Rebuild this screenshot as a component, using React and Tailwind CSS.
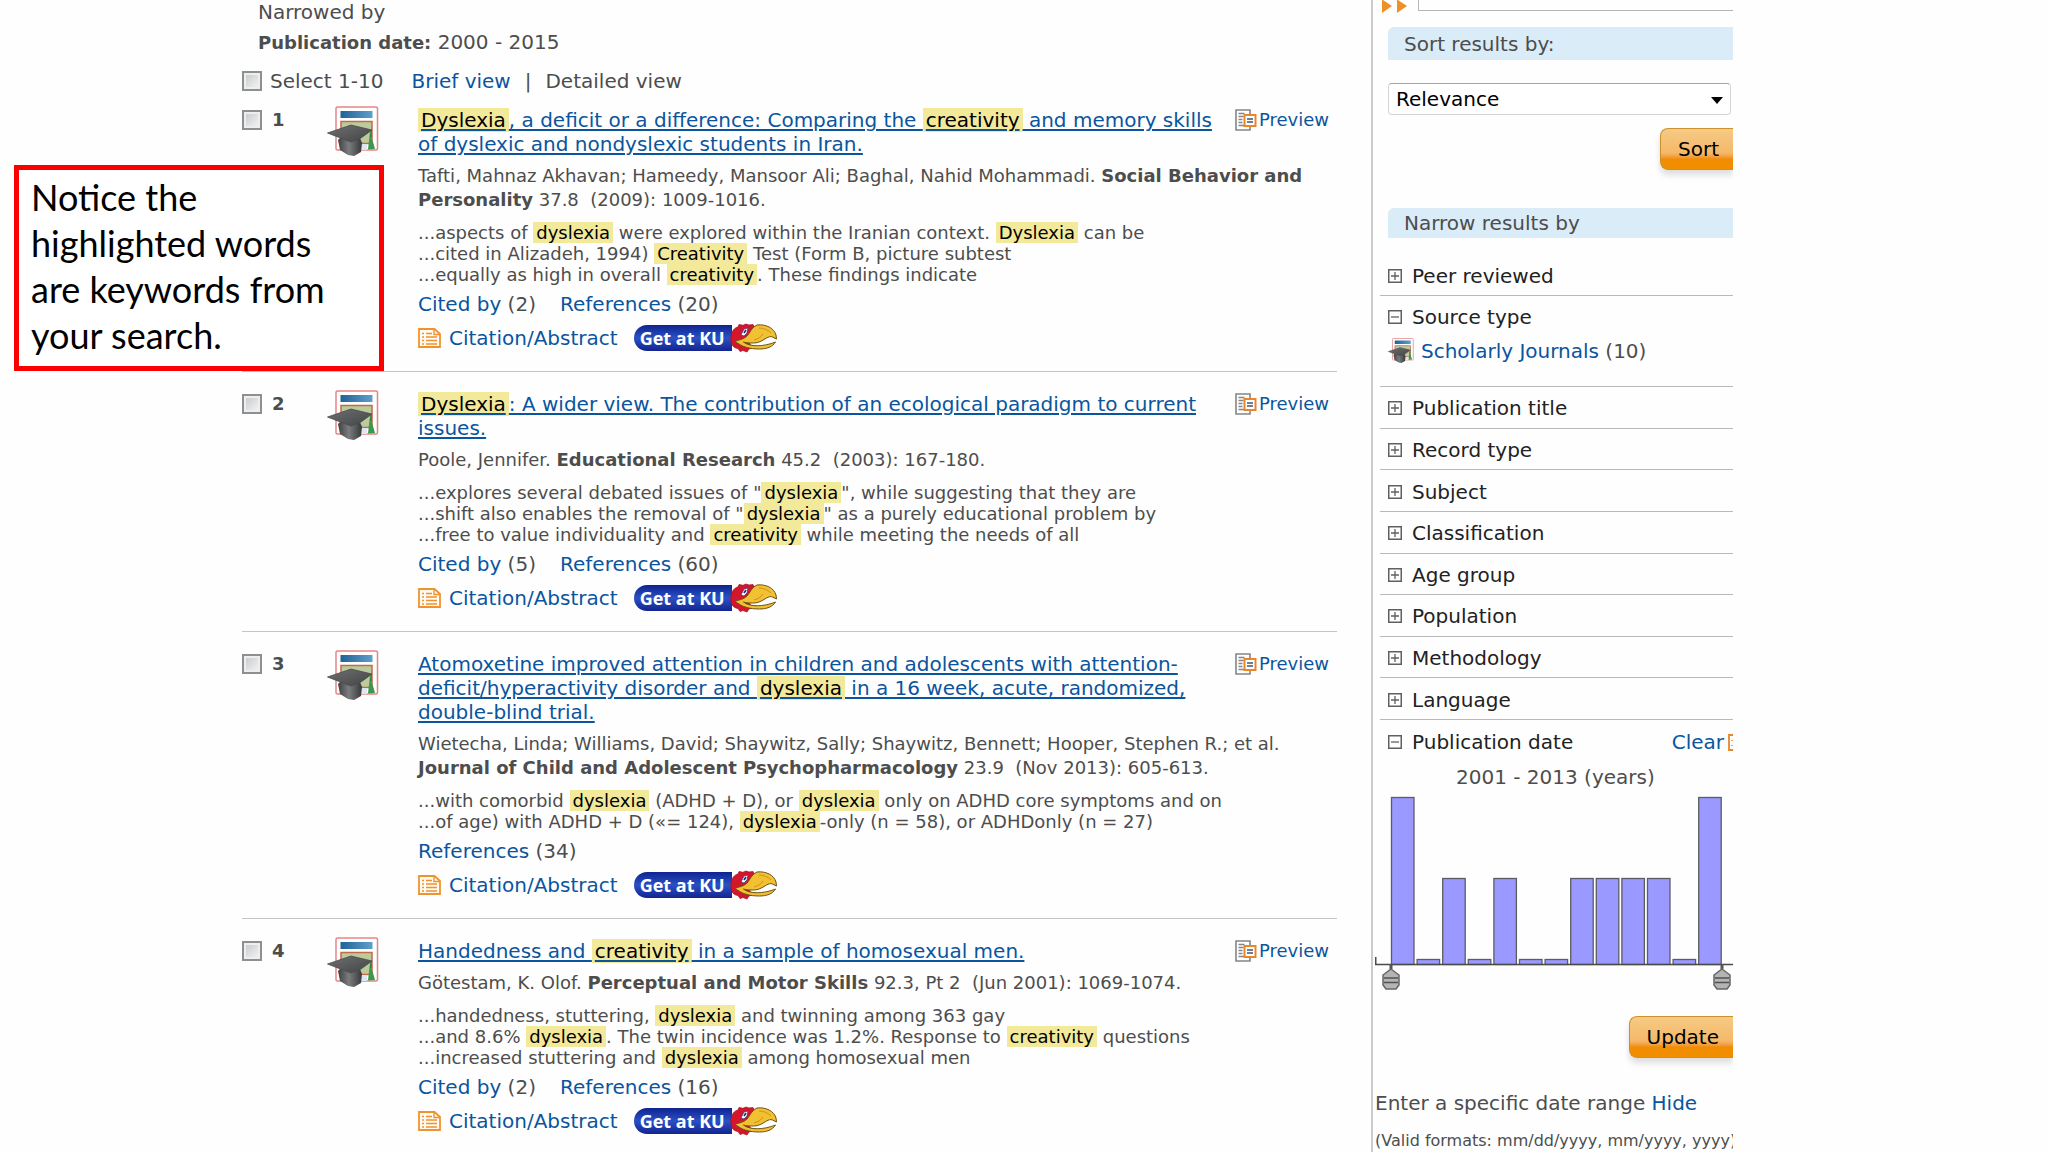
import React from "react";

function Mark({ children }) {
  return <mark className="bg-[#f3e99b] px-[3px] text-black">{children}</mark>;
}

/* Splits a string on *stars* and highlights the starred keywords. */
function Rich({ text }) {
  return text
    .split("*")
    .map((part, i) => (i % 2 ? <Mark key={i}>{part}</Mark> : <React.Fragment key={i}>{part}</React.Fragment>));
}

function Lines({ lines }) {
  return lines.map((line, i) => (
    <span key={i} className="block whitespace-pre">
      <Rich text={line} />
    </span>
  ));
}

function Check({ id, label }) {
  return (
    <input
      id={id}
      type="checkbox"
      aria-label={label}
      className="size-5 shrink-0 appearance-none border-2 border-[#8e8f8f] bg-linear-to-br from-[#c4c8cc] to-[#f6f6f6] outline-2 -outline-offset-4 outline-[#eeeeee]"
    />
  );
}

function JournalIcon({ className }) {
  return (
    <svg viewBox="0 0 52 52" className={className} aria-hidden="true">
      <defs>
        <linearGradient id="bar" x1="0" x2="1">
          <stop offset="0" stopColor="#1f6297" />
          <stop offset="1" stopColor="#5f9fcb" />
        </linearGradient>
        <linearGradient id="cap" x1="0" x2="1" y2="1">
          <stop offset="0" stopColor="#6f7072" />
          <stop offset="1" stopColor="#434446" />
        </linearGradient>
        <linearGradient id="base" x1="0" x2="1">
          <stop offset="0" stopColor="#3f4042" />
          <stop offset="0.45" stopColor="#7b7c7e" />
          <stop offset="1" stopColor="#37383a" />
        </linearGradient>
      </defs>
      <rect x="9" y="1" width="41.500" height="43" rx="1.500" fill="#fff" stroke="#e58585" strokeWidth="1.500" />
      <rect x="13.500" y="5" width="32" height="7" fill="url(#bar)" />
      <rect x="14" y="15.500" width="31" height="22" fill="#bccb9c" stroke="#c4694a" strokeWidth="1.500" />
      <path d="M34 44h6v-6h-6z" fill="#dfe6f3" />
      <path d="M43 26c2 3 1 7 3 10l2 7-7 .5 1-9z" fill="#38994f" />
      <path d="M11 34l3-3 19 1 2 5-1 9-7 4-6-1-8-5z" fill="url(#base)" />
      <path d="M.5 27L24 19l21 5-11 8-10 4-8-3z" fill="url(#cap)" stroke="#4a4b4d" strokeWidth=".8" />
      <path d="M44 25v6" stroke="#2f7f45" strokeWidth="1.500" />
    </svg>
  );
}

function PreviewIcon() {
  return (
    <svg viewBox="0 0 22 23" className="h-[23px] w-[22px] shrink-0" fill="none" aria-hidden="true">
      <path d="M1 1h14v20H1z" fill="#fff" stroke="#858585" strokeWidth="1.600" />
      <path d="M3.500 4.500h6M3.500 7.500h5M3.500 10.500h4M3.500 13.500h4M3.500 16.500h7" stroke="#858585" strokeWidth="1.300" />
      <path d="M9.500 6h11v11h-11z" fill="#fff" stroke="#e8862c" strokeWidth="2" />
      <path d="M12 10h6M12 13h6" stroke="#6f7f92" strokeWidth="1.800" />
    </svg>
  );
}

function CitationIcon() {
  return (
    <svg viewBox="0 0 23 20" className="h-5 w-[23px] shrink-0" fill="none" stroke="#f0932f" aria-hidden="true">
      <path d="M1 1h15.500L22 6v13H1z" fill="#fffaf2" strokeWidth="1.800" />
      <path d="M16 1v5.500h6" strokeWidth="1.400" />
      <path d="M4 5.500h2M8 5.500h6M4 9h2M8 9h11M4 12.500h2M8 12.500h11M4 16h2M8 16h11" strokeWidth="1.600" />
    </svg>
  );
}

function JayhawkIcon() {
  return (
    <svg viewBox="0 0 50 30" className="-ml-1 h-[30px] w-[50px] shrink-0" aria-hidden="true">
      <path
        d="M3 18C2 11 5 5 10 4l1-2.500 4 .8L18 1l3 1 4-.5L27 5l-2 5-5 7 4 8-3 1-2 3-4-1.500-3 1-2-3C6 25 3 22 3 18z"
        fill="#d3162b"
        stroke="#a30e20"
        strokeWidth=".7"
      />
      <path
        d="M7 18c5-1 9-2 12-5 3-3 4-8 10-11 9-1 17 3 19 10l.5 4-4-2c-2-1-4 0-6 1-5 3-8 5-13 5-3 0-8 0-10-1 6 5 20 5 32 0-3 5-9 7-16 7-10 0-18-2-24.500-8z"
        fill="#f2c132"
        stroke="#6e5116"
        strokeWidth="1"
        strokeLinejoin="round"
      />
      <path d="M26 17c4-1 7-3 9-6M31 5c5 0 9 2 12 5" fill="none" stroke="#c8921f" strokeWidth="1" />
      <path d="M13 12l3-6 4-1-1 5-3 3z" fill="#fff" stroke="#38306a" strokeWidth=".7" />
      <path d="M16 10l2-3" stroke="#1a2a86" strokeWidth="1.600" />
    </svg>
  );
}

function ToggleIcon({ open }) {
  return (
    <svg viewBox="0 0 14 14" className="size-3.5 shrink-0" fill="none" stroke="#606060" aria-hidden="true">
      <path d="M.75.75h12.500v12.500H.75z" strokeWidth="1.500" />
      <path d={open ? "M3 7h8" : "M3 7h8M7 3v8"} strokeWidth="1.300" />
    </svg>
  );
}

const RESULTS = [
  {
    title: [
      "*Dyslexia*, a deficit or a difference: Comparing the *creativity* and memory skills",
      "of dyslexic and nondyslexic students in Iran.",
    ],
    source: (
      <>
        Tafti, Mahnaz Akhavan; Hameedy, Mansoor Ali; Baghal, Nahid Mohammadi. <b>Social Behavior and</b>
        <br />
        <b>Personality</b> 37.8&nbsp; (2009): 1009-1016.
      </>
    ),
    snippets: [
      "...aspects of *dyslexia* were explored within the Iranian context. *Dyslexia* can be",
      "...cited in Alizadeh, 1994) *Creativity* Test (Form B, picture subtest",
      "...equally as high in overall *creativity*. These findings indicate",
    ],
    cited: 2,
    refs: 20,
  },
  {
    title: ["*Dyslexia*: A wider view. The contribution of an ecological paradigm to current", "issues."],
    source: (
      <>
        Poole, Jennifer. <b>Educational Research</b> 45.2&nbsp; (2003): 167-180.
      </>
    ),
    snippets: [
      '...explores several debated issues of "*dyslexia*", while suggesting that they are',
      '...shift also enables the removal of "*dyslexia*" as a purely educational problem by',
      "...free to value individuality and *creativity* while meeting the needs of all",
    ],
    cited: 5,
    refs: 60,
  },
  {
    title: [
      "Atomoxetine improved attention in children and adolescents with attention-",
      "deficit/hyperactivity disorder and *dyslexia* in a 16 week, acute, randomized,",
      "double-blind trial.",
    ],
    source: (
      <>
        Wietecha, Linda; Williams, David; Shaywitz, Sally; Shaywitz, Bennett; Hooper, Stephen R.; et al.
        <br />
        <b>Journal of Child and Adolescent Psychopharmacology</b> 23.9&nbsp; (Nov 2013): 605-613.
      </>
    ),
    snippets: [
      "...with comorbid *dyslexia* (ADHD + D), or *dyslexia* only on ADHD core symptoms and on",
      "...of age) with ADHD + D («= 124), *dyslexia*-only (n = 58), or ADHDonly (n = 27)",
    ],
    refs: 34,
  },
  {
    title: ["Handedness and *creativity* in a sample of homosexual men."],
    source: (
      <>
        Götestam, K. Olof. <b>Perceptual and Motor Skills</b> 92.3, Pt 2&nbsp; (Jun 2001): 1069-1074.
      </>
    ),
    snippets: [
      "...handedness, stuttering, *dyslexia* and twinning among 363 gay",
      "...and 8.6% *dyslexia*. The twin incidence was 1.2%. Response to *creativity* questions",
      "...increased stuttering and *dyslexia* among homosexual men",
    ],
    cited: 2,
    refs: 16,
  },
];

function Result({ item, number }) {
  return (
    <li className="flex border-b border-[#c4c4c4] pt-5 pb-[21px] first:pt-0 last:border-0">
      <label className="flex h-6 w-[85px] shrink-0 items-center gap-2.5 text-lg font-bold">
        <Check label={`Select result ${number}`} />
        {number}
      </label>
      <JournalIcon className="-mt-0.5 mr-[39px] size-[52px] shrink-0" />
      <div className="min-w-0 flex-1">
        <div className="flex items-start justify-between">
          <h2 className="text-xl leading-6">
            <a href="#" className="text-[#0a559e] underline decoration-2 underline-offset-2">
              <Lines lines={item.title} />
            </a>
          </h2>
          <a href="#" className="mr-2 flex h-6 shrink-0 items-center gap-0.5 text-lg text-[#0a559e]">
            <PreviewIcon />
            Preview
          </a>
        </div>
        <p className="mt-2 text-lg leading-6 whitespace-nowrap">{item.source}</p>
        <p className="mt-2.5 text-lg leading-[21px]">
          <Lines lines={item.snippets} />
        </p>
        <p className="mt-[7px] flex gap-6 text-xl leading-6">
          {item.cited && (
            <span>
              <a href="#" className="text-[#0a559e]">Cited by</a> ({item.cited})
            </span>
          )}
          <span>
            <a href="#" className="text-[#0a559e]">References</a> ({item.refs})
          </span>
        </p>
        <div className="mt-2.5 flex h-6 items-center text-xl">
          <a href="#" className="flex items-center gap-2 text-[#0a559e]">
            <CitationIcon />
            Citation/Abstract
          </a>
          <a href="#" className="ml-4 flex h-[30px] items-center" aria-label="Get at KU">
            <span className="flex h-[26px] w-[98px] items-center rounded-l-full bg-linear-to-b from-[#0f2390] via-[#2c50c4] to-[#13248f] pl-1.5 font-['Open_Sans',sans-serif] text-lg font-bold whitespace-nowrap text-white">
              Get at KU
            </span>
            <JayhawkIcon />
          </a>
        </div>
      </div>
    </li>
  );
}

const FACETS = [
  "Publication title",
  "Record type",
  "Subject",
  "Classification",
  "Age group",
  "Population",
  "Methodology",
  "Language",
];

function Facet({ label, open }) {
  return (
    <button type="button" className="flex items-center gap-2.5 pl-2 text-left text-xl leading-6 text-[#222222]">
      <ToggleIcon open={open} />
      {label}
    </button>
  );
}

const YEARS = [167, 5, 86, 5, 86, 5, 5, 86, 86, 86, 86, 5, 167];

function Handle({ x }) {
  return (
    <g transform={`translate(${x} 170)`}>
      <path d="M0-2v5" stroke="#555" strokeWidth="3" />
      <path d="M0 3l8 6v10l-3 4H-5l-3-4V9z" fill="#b4b4b4" stroke="#666" strokeWidth="1.500" />
      <path d="M-7 12H7M-7 16.500H7" stroke="#505050" strokeWidth="1.500" />
    </g>
  );
}

function YearChart() {
  return (
    <svg viewBox="0 0 358 196" className="h-[196px] w-[358px] shrink-0" role="img" aria-label="Results per year">
      {YEARS.map((h, i) => (
        <rect
          key={i}
          x={16.5 + i * 25.6}
          y={168.5 - h}
          width="22.500"
          height={h}
          fill="#9999ff"
          stroke="#5c5c66"
          strokeWidth="1.300"
        />
      ))}
      <path d="M.75 161v7.500H358" fill="none" stroke="#4a4a4a" strokeWidth="1.500" />
      <Handle x={16} />
      <Handle x={347} />
    </svg>
  );
}

function OrangeButton({ children }) {
  return (
    <button
      type="button"
      className="h-[42px] rounded-l-lg border border-r-0 border-[#c9922f] bg-linear-to-b from-[#f6ca85] from-0% via-[#f5b868] via-60% to-[#f18e00] to-75% pr-3.5 pl-[17px] text-xl text-black shadow-[0_5px_6px_#dddddd]"
    >
      {children}
    </button>
  );
}

function Sidebar() {
  return (
    <aside className="w-[362px] shrink-0 overflow-hidden border-l-2 border-[#cccccc] whitespace-nowrap">
      <div className="flex h-[27px] items-start pl-[9px]">
        <svg viewBox="0 0 26 13" className="mr-2.5 h-[13px] w-[26px]" fill="#ee8f28" aria-hidden="true">
          <path d="M0 0h1l9 6-10 7zM15 0h1l9 6-10 7z" />
        </svg>
        <div className="h-[11px] flex-1 border-b border-l border-[#b5b5b5]" />
      </div>

      <h2 className="ml-[15px] flex h-[33px] items-center rounded-tl-md bg-[#d9ecf7] pl-4 text-xl">
        Sort results by:
      </h2>
      <div className="relative mt-[23px] mr-0.5 ml-[15px]">
        <select
          aria-label="Sort results by"
          className="block h-8 w-full appearance-none rounded-sm border border-[#d5d5d5] border-t-[#a5a5a5] bg-white pl-[7px] text-xl leading-6 text-black"
        >
          <option>Relevance</option>
        </select>
        <svg viewBox="0 0 12 7" className="pointer-events-none absolute top-3.5 right-2 h-[7px] w-3" aria-hidden="true">
          <path d="M0 0h12L6 7z" />
        </svg>
      </div>
      <div className="mt-[13px] flex justify-end">
        <OrangeButton>Sort</OrangeButton>
      </div>

      <h2 className="mt-[38px] ml-[15px] flex h-[30px] items-center rounded-tl-md bg-[#d9ecf7] pl-4 text-xl">
        Narrow results by
      </h2>
      <div className="ml-[7px]">
        <div className="mt-[26px] border-b border-[#b9b9b9] pb-[7px]">
          <Facet label="Peer reviewed" />
        </div>
        <div className="border-b border-[#b9b9b9] pt-[9px] pb-[23px]">
          <Facet label="Source type" open />
          <p className="mt-2.5 flex h-6 items-center gap-[7px] pl-2 text-xl">
            <JournalIcon className="size-[26px]" />
            <span>
              <a href="#" className="text-[#0a559e]">Scholarly Journals</a> (10)
            </span>
          </p>
        </div>
        <ul className="grid h-[333px] auto-rows-fr">
          {FACETS.map((label) => (
            <li key={label} className="flex items-center border-b border-[#b9b9b9] pt-0.5">
              <Facet label={label} />
            </li>
          ))}
        </ul>
        <div className="mt-2.5 flex items-center justify-between">
          <Facet label="Publication date" open />
          <a href="#" className="flex items-center gap-1 text-xl leading-6 text-[#0a559e]">
            Clear
            <svg viewBox="0 0 5 17" className="h-[17px] w-[5px]" fill="none" stroke="#e8862c" aria-hidden="true">
              <path d="M5 1H1v15h4" strokeWidth="1.800" />
              <path d="M4 6v1M4 11v1" strokeWidth="1.500" />
            </svg>
          </a>
        </div>
      </div>
      <p className="mt-[11px] pl-[83px] text-xl leading-6">2001 - 2013 (years)</p>
      <div className="mt-[7px] pl-0.5">
        <YearChart />
      </div>
      <div className="mt-6 flex justify-end">
        <OrangeButton>Update</OrangeButton>
      </div>
      <p className="mt-[33px] pl-0.5 text-xl leading-6">
        Enter a specific date range <a href="#" className="text-[#0a559e]">Hide</a>
      </p>
      <p className="mt-3.5 pl-0.5 text-base leading-6">(Valid formats: mm/dd/yyyy, mm/yyyy, yyyy)</p>
    </aside>
  );
}

export default function App() {
  return (
    <div className="relative flex h-screen overflow-hidden bg-[#fefefe] pr-[315px] pl-[242px] font-['DejaVu_Sans',sans-serif] text-[#4d4d4d]">
      <main className="mr-[34px] min-w-0 flex-1">
        <p className="pl-4 text-xl leading-6">Narrowed by</p>
        <p className="mt-[5px] pl-4 text-xl leading-6">
          <b className="text-lg">Publication date:</b> 2000 - 2015
        </p>
        <div className="mt-3 mb-[15px] flex items-center text-xl leading-6">
          <label className="flex items-center gap-2">
            <Check id="select-all" />
            Select 1-10
          </label>
          <a href="#" className="ml-7 text-[#0a559e]">Brief view</a>
          <span className="mx-3.5">|</span>
          <span>Detailed view</span>
        </div>
        <ol>
          {RESULTS.map((item, i) => (
            <Result key={i} item={item} number={i + 1} />
          ))}
        </ol>
      </main>
      <Sidebar />
      <div className="absolute top-[165px] left-3.5 w-[370px] border-[5px] border-[#fb0000] bg-white px-3 pt-1 pb-2 font-['Lato',sans-serif] text-4xl leading-[46px] whitespace-nowrap text-black">
        Notice the
        <br />
        highlighted words
        <br />
        are keywords from
        <br />
        your search.
      </div>
    </div>
  );
}
